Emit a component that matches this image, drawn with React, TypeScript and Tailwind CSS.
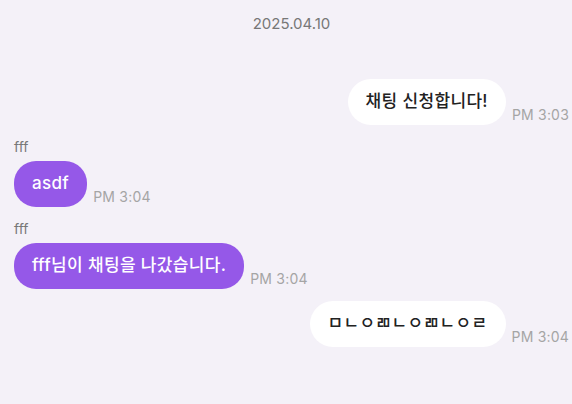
const font = { fontFamily: '"Inter", "Noto Sans CJK KR", sans-serif' };

type Msg = { mine: boolean; name?: string; text: string; time: string };

const messages: Msg[] = [
  { mine: true, text: "채팅 신청합니다!", time: "PM 3:03" },
  { mine: false, name: "fff", text: "asdf", time: "PM 3:04" },
  { mine: false, name: "fff", text: "fff님이 채팅을 나갔습니다.", time: "PM 3:04" },
  { mine: true, text: "ㅁㄴㅇㄻㄴㅇㄻㄴㅇㄹ", time: "PM 3:04" },
];

export default function App() {
  return (
    <div
      className="w-[572px] h-[404px] bg-[#f4f1f8] overflow-hidden pl-[14px] pr-[3px] pt-[13px]"
      style={font}
    >
      <div className="text-center text-[15px] leading-[22px] text-[#777777]">2025.04.10</div>
      <div className="flex flex-col gap-3 mt-[44px]">
        {messages.map((m, i) =>
          m.mine ? (
            <div key={i} className="flex justify-end items-end gap-[6px]">
              <div className="bg-white rounded-full h-[46px] px-[18px] flex items-center text-[17px] tracking-[0.35px] font-medium text-[#222222]">
                {m.text}
              </div>
              <span className="text-[14px] leading-[20px] tracking-[0.2px] text-[#a5a5a5]">{m.time}</span>
            </div>
          ) : (
            <div key={i} className="flex flex-col">
              <span className="text-[14px] leading-[20px] text-[#777777] mb-1">{m.name}</span>
              <div className="flex items-end gap-[6px]">
                <div className="bg-[#9558e8] rounded-[22px] h-[46px] px-[18px] flex items-center text-[17px] tracking-[0.35px] font-medium text-white">
                  {m.text}
                </div>
                <span className="text-[14px] leading-[20px] tracking-[0.2px] text-[#a5a5a5]">{m.time}</span>
              </div>
            </div>
          )
        )}
      </div>
    </div>
  );
}
